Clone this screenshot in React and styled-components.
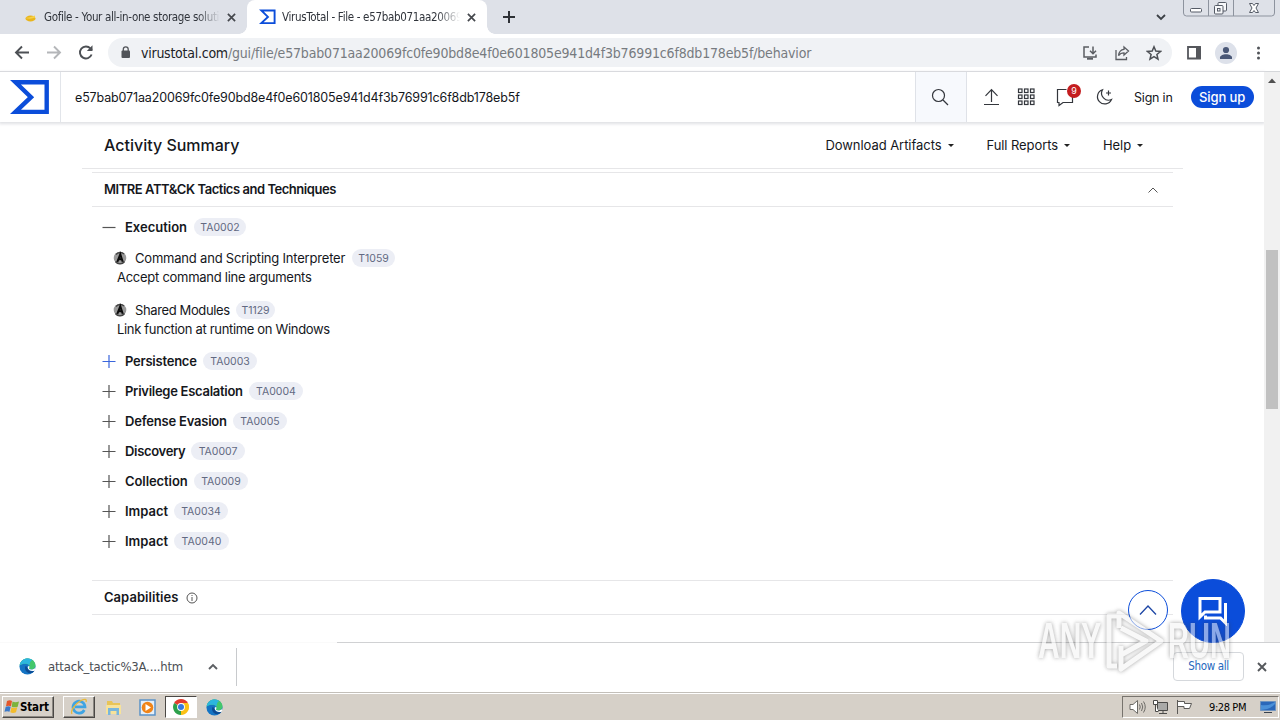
import React from "react";
import styled, { createGlobalStyle, css } from "styled-components";

const HASH = "e57bab071aa20069fc0fe90bd8e4f0e601805e941d4f3b76991c6f8db178eb5f";

const tactics = [
  { name: "Persistence", code: "TA0003", active: true, width: 72, badge: 54, track: -0.23 },
  { name: "Privilege Escalation", code: "TA0004", width: 118, badge: 54, track: -0.27 },
  { name: "Defense Evasion", code: "TA0005", width: 102, badge: 54, track: -0.2 },
  { name: "Discovery", code: "TA0007", width: 60, badge: 54, track: -0.32 },
  { name: "Collection", code: "TA0009", width: 63, badge: 54, track: -0.08 },
  { name: "Impact", code: "TA0034", width: 43, badge: 54, track: 0 },
  { name: "Impact", code: "TA0040", width: 43, badge: 55, track: 0 },
];

const GlobalStyle = createGlobalStyle`
  * {
    box-sizing: border-box;
  }

  body {
    margin: 0;
    background: #fff;
    overflow: hidden;
    font-family: Inter, "Liberation Sans", sans-serif;
  }
`;

const systemFont = css`
  font-family: "DejaVu Sans Condensed", "Noto Sans", sans-serif;
  font-stretch: condensed;
`;

const Screen = styled.div`
  width: 1280px;
  height: 720px;
  display: flex;
  flex-direction: column;
  background: #fff;
  color: #15171c;
  overflow: hidden;
  white-space: nowrap;
`;

const TabStrip = styled.div`
  height: 34px;
  display: flex;
  align-items: stretch;
  background: #dee1e8;
`;

const Tab = styled.div`
  position: relative;
  width: ${(p) => (p.$active ? 240 : 247)}px;
  display: flex;
  align-items: center;
  padding: 0 11px 0 ${(p) => (p.$active ? 12 : 22)}px;
  background: ${(p) => (p.$active ? "#fff" : "transparent")};
  border-radius: 8px 8px 0 0;

  &::before,
  &::after {
    content: "";
    display: ${(p) => (p.$active ? "block" : "none")};
    position: absolute;
    bottom: 0;
    width: 8px;
    height: 8px;
  }

  &::before {
    left: -8px;
    background: radial-gradient(circle at 0 0, transparent 7.5px, #fff 8px);
  }

  &::after {
    right: -8px;
    background: radial-gradient(circle at 100% 0, transparent 7.5px, #fff 8px);
  }
`;

const TabTitle = styled.span`
  ${systemFont}
  width: ${(p) => p.$width}px;
  margin-left: ${(p) => p.$gap}px;
  font-size: 11.5px;
  letter-spacing: ${(p) => p.$track}px;
  color: #30343b;
  overflow: hidden;
  -webkit-mask-image: linear-gradient(90deg, #000 87%, transparent);
  mask-image: linear-gradient(90deg, #000 87%, transparent);
`;

const TabClose = styled.svg`
  width: 9px;
  height: 9px;
  margin-left: auto;
`;

const NewTab = styled.svg`
  width: 12px;
  height: 12px;
  margin: 11px 0 0 16px;
`;

const TabSearch = styled.svg`
  width: 10px;
  height: 7px;
  margin: 14px 0 0 auto;
`;

const WindowButtons = styled.svg`
  width: 94px;
  height: 17px;
  margin: 0 4px 0 16px;
`;

const Toolbar = styled.div`
  height: 38px;
  display: flex;
  align-items: center;
  border-bottom: 1px solid #d5d7da;
  background: #fff;
`;

const NavIcon = styled.svg`
  width: 16px;
  height: 16px;
  margin-left: ${(p) => p.$gap}px;
  flex: none;
`;

const AddressBar = styled.div`
  ${systemFont}
  width: 1064px;
  height: 29px;
  margin-left: 14px;
  padding: 0 10px 0 12px;
  border-radius: 15px;
  background: #f0f2f5;
  display: flex;
  align-items: center;
  color: #777b80;
  font-size: 14px;
`;

const Domain = styled.span`
  margin-left: 10px;
  letter-spacing: -0.25px;
  color: #202226;
`;

const UrlPath = styled.span`
  letter-spacing: -0.17px;
`;

const AddressActions = styled.div`
  display: flex;
  gap: 16px;
  margin-left: auto;

  svg {
    width: 16px;
    height: 16px;
  }
`;

const Profile = styled.div`
  width: 22px;
  height: 22px;
  margin-left: 13px;
  border-radius: 50%;
  background: #dde1ea;
  overflow: hidden;
`;

const PageArea = styled.div`
  height: 570px;
  display: flex;
  position: relative;
`;

const Page = styled.div`
  width: 1264px;
  background: #fff;
`;

const Header = styled.header`
  height: 50px;
  display: flex;
  align-items: center;
  box-shadow: 0 1px 3px 1px #dfe0e4;
`;

const LogoCell = styled.div`
  width: 61px;
  height: 100%;
  padding: 8px 0 0 10px;
  border-right: 1px solid #e2e5ea;
`;

const SearchText = styled.div`
  flex: 1;
  padding-left: 14px;
  font-size: 12.5px;
  letter-spacing: -0.14px;
`;

const SearchButton = styled.div`
  width: 52px;
  height: 100%;
  display: flex;
  align-items: center;
  justify-content: center;
  padding-right: 2px;
  background: #f7f9fd;
  border: solid #dfe2e8;
  border-width: 0 1px;
`;

const HeaderActions = styled.div`
  width: 297px;
  display: flex;
  align-items: center;
  padding-left: 14px;
`;

const HeaderIcon = styled.svg`
  width: 20px;
  height: 20px;
  margin-right: ${(p) => p.$gap}px;
  fill: none;
  stroke: #33363c;
  stroke-width: 1.2;
`;

const ChatIcon = styled.div`
  position: relative;
  display: flex;
`;

const Counter = styled.span`
  position: absolute;
  left: 12px;
  top: -3px;
  width: 14px;
  height: 14px;
  border-radius: 50%;
  background: #c41d1f;
  color: #fff;
  font-size: 9px;
  line-height: 14px;
  text-align: center;
`;

const SignIn = styled.span`
  font-size: 12.5px;
  letter-spacing: -0.2px;
`;

const SignUp = styled.span`
  width: 63px;
  height: 22px;
  margin-left: 18px;
  border-radius: 11px;
  background: #0b4dda;
  color: #fff;
  font-size: 13px;
  font-weight: 500;
  letter-spacing: -0.1px;
  line-height: 22px;
  text-align: center;
`;

const SummaryBar = styled.div`
  height: 47px;
  width: 1101px;
  margin-left: 82px;
  padding: 0 40px 0 22px;
  display: flex;
  align-items: center;
  border-bottom: 1px solid #e6e6e8;
`;

const SummaryTitle = styled.h1`
  margin: 0 auto 0 0;
  font-size: 16px;
  font-weight: 500;
  letter-spacing: ${(p) => p.$track}px;
`;

const MenuLabel = styled.span`
  display: flex;
  align-items: center;
  margin-left: ${(p) => p.$gap}px;
  font-size: 13px;
  letter-spacing: ${(p) => p.$track}px;

  &::after {
    content: "";
    margin: 1px 0 0 6px;
    border: solid transparent;
    border-width: 3px 3px 0;
    border-top-color: #222;
  }
`;

const SectionHeader = styled.div`
  width: 1081px;
  height: 35px;
  margin: ${(p) => p.$top}px 0 0 92px;
  padding: 0 15px 1px 12px;
  display: flex;
  align-items: center;
  border: solid #e6e6e8;
  border-width: 1px 0;
`;

const SectionTitle = styled.h2`
  margin: 0;
  font-size: 13px;
  font-weight: 600;
  letter-spacing: ${(p) => p.$track}px;
`;

const TacticList = styled.div`
  height: 373px;
  padding: 4px 0 0 102px;
`;

const TacticRow = styled.div`
  height: 30px;
  display: flex;
  align-items: center;
  padding-top: 1px;
`;

const ToggleIcon = styled.svg`
  width: 14px;
  height: 14px;
  margin-right: 9px;
  stroke: ${(p) => (p.$active ? "#3a66dc" : "#555")};
  stroke-width: 1.2;
`;

const TacticName = styled.span`
  width: ${(p) => p.$width}px;
  font-size: 13px;
  font-weight: 600;
  letter-spacing: ${(p) => p.$track}px;
`;

const Badge = styled.span`
  width: ${(p) => p.$width}px;
  height: 18px;
  margin-left: 6px;
  border-radius: 9px;
  background: #eceef5;
  color: #626982;
  font-size: 10.5px;
  line-height: 19px;
  text-align: center;
`;

const Technique = styled.div`
  height: 52px;
  padding: 7px 0 0 11px;
`;

const TechniqueRow = styled.div`
  height: 20px;
  display: flex;
  align-items: center;
`;

const TechniqueName = styled.span`
  width: ${(p) => p.$width}px;
  margin-left: 8px;
  font-size: 13px;
  letter-spacing: ${(p) => p.$track}px;
`;

const TechniqueNote = styled.div`
  padding-left: 4px;
  font-size: 13px;
  line-height: 19px;
  letter-spacing: ${(p) => p.$track}px;
`;

const Scrollbar = styled.div`
  width: 16px;
  background: #f1f1f1;
  padding-left: 2px;
`;

const ScrollArrow = styled.svg`
  display: block;
  width: 14px;
  height: 17px;
`;

const ScrollThumb = styled.div`
  width: 12px;
  height: 159px;
  margin-top: 161px;
  background: #c1c1c1;
`;

const FloatingButton = styled.div`
  position: absolute;
  left: ${(p) => p.$left}px;
  top: ${(p) => p.$top}px;
  width: ${(p) => p.$size}px;
  height: ${(p) => p.$size}px;
  border: 1px solid #0b4dda;
  border-radius: 50%;
  background: ${(p) => (p.$solid ? "#0b4dda" : "#fff")};
  display: flex;
  align-items: center;
  justify-content: center;
`;

const DownloadBar = styled.div`
  ${systemFont}
  height: 50px;
  display: flex;
  align-items: center;
  background: #fff;
  border-top: 1px solid #d0d1d3;
  border-image: linear-gradient(90deg, #fafafa 337px, #d0d1d3 337px) 1;
  padding: 0 13px 2px 19px;
`;

const FileName = styled.span`
  width: 134px;
  margin: 0 26px 0 12px;
  font-size: 13px;
  letter-spacing: -0.2px;
  color: #4b4e53;
`;

const Divider = styled.div`
  width: 1px;
  height: 38px;
  margin-left: 18px;
  background: #c8cacd;
`;

const ShowAll = styled.div`
  width: 71px;
  height: 29px;
  margin: 0 13px 0 auto;
  border: 1px solid #d5d8dc;
  border-radius: 4px;
  color: #2567bd;
  font-size: 11.5px;
  letter-spacing: -0.35px;
  line-height: 27px;
  text-align: center;
`;

const Taskbar = styled.div`
  ${systemFont}
  height: 28px;
  display: flex;
  align-items: center;
  padding: 1px 1px 0 2px;
  background: #d6d0c8;
  border-top: 1px solid #c3bfb9;
  box-shadow: inset 0 1px #fff;
`;

const StartButton = styled.div`
  width: 52px;
  height: 22px;
  display: flex;
  align-items: center;
  padding-left: 1px;
  border: 1px solid;
  border-color: #fff #4b4845 #4b4845 #fff;
  box-shadow: inset -1px -1px #8c8882;
  font-size: 11.5px;
  font-weight: 700;
  letter-spacing: -0.15px;
  color: #000;
`;

const TaskButton = styled.div`
  width: 32px;
  height: 22px;
  margin-left: ${(p) => p.$gap || 0}px;
  display: flex;
  align-items: center;
  justify-content: center;
  border: 1px solid transparent;
  ${(p) =>
    p.$look === "raised" &&
    css`
      border-color: #fff #4b4845 #4b4845 #fff;
      box-shadow: inset -1px -1px #8c8882;
    `}
  ${(p) =>
    p.$look === "pressed" &&
    css`
      background: #fff;
      border-color: #4b4845 #fff #fff #4b4845;
    `}
`;

const Tray = styled.div`
  width: 157px;
  height: 22px;
  margin-left: auto;
  display: flex;
  align-items: center;
  padding-left: 6px;
  border: 1px solid;
  border-color: #77736d #fff #fff #77736d;

  svg {
    flex: none;
  }
`;

const TrayIcon = styled.svg`
  width: 17px;
  height: 16px;
  margin-right: 7px;
`;

const Clock = styled.span`
  width: 40px;
  margin: 0 11px 0 8px;
  font-size: 11px;
  letter-spacing: -0.4px;
  color: #000;
`;

const Watermark = styled.div`
  position: absolute;
  left: 1038px;
  top: 608px;
  width: 196px;
  height: 66px;
  display: flex;
  align-items: center;
  opacity: 0.55;
  filter: drop-shadow(0 0 2px rgba(60, 60, 60, 0.85));
`;

const WatermarkWord = styled.span`
  width: 66px;
  font-family: "Liberation Sans Narrow", "Liberation Sans", sans-serif;
  font-size: 50px;
  font-weight: 700;
  line-height: 68px;
  color: #f4f4f4;
  transform: scaleX(${(p) => p.$squeeze});
  transform-origin: left;
`;

const WatermarkPlay = styled.svg`
  width: 64px;
  height: 66px;
  flex: none;
  fill: none;
  stroke: #f4f4f4;
  stroke-width: 5;
  stroke-linejoin: round;
`;

const CollapseIcon = styled.svg`
  width: 10px;
  height: 6px;
  margin: 1px 0 0 auto;
`;

const InfoIcon = styled.svg`
  width: 12px;
  height: 12px;
  margin: 1px 0 0 8px;
`;

const CloseGlyph = () => (
  <TabClose viewBox="0 0 10 10" stroke="#45484d" strokeWidth="1.900">
    <path d="M1 1l8 8M9 1L1 9" />
  </TabClose>
);

const VtLogo = ({ width, height, stroke }) => (
  <svg width={width} height={height} viewBox="0 0 40 35">
    <path d="M5.500 2.300H36.700V31.900H5.500L21 17.200Z" fill="none" stroke="#0b4dda" strokeWidth={stroke} />
  </svg>
);

const EdgeLogo = ({ size = 17 }) => (
  <svg width={size} height={size} viewBox="0 0 18 18">
    <circle cx="9" cy="9" r="8.500" fill="#1474c4" />
    <path d="M.6 8C1.400 3.300 5 .5 9 .5c5 0 8.500 3.500 8.500 7.300 0 3-2.300 4.400-4.700 4.400-1.500 0-2.400-.5-2.400-1.200 0-.6.700-.9.700-2C11.100 7.300 9.300 6 6.600 6 4.200 6 2 6.700.6 8z" fill="#43c76c" />
    <path d="M.6 8C1.400 3.300 5 .5 9 .5c2 0 3.800.6 5.200 1.600C11 3.500 12 6 11 7.800 10.400 6.500 8.800 6 6.600 6 4.200 6 2 6.700.6 8z" fill="#2cb6df" />
    <path d="M7 8.500c-1.600 3 .4 7.500 4.600 7.500 2 0 3.700-.7 4.800-2.400-3 1.200-7.300.3-7.500-4.100z" fill="#0d4b93" />
    <path d="M10.500 8.200c.9.900.7 1.800.2 2.500-.5.800.4 1.500 2.100 1.500 1.900 0 3.300-.6 4-1.600l.5 1.300-.7 1.500c-3.200.9-7.300-.2-7.500-3.800z" fill="#fff" />
  </svg>
);

const AttackIcon = () => (
  <svg width="14" height="14" viewBox="0 0 14 14">
    <circle cx="7" cy="7" r="6.300" fill="#9a9a9a" />
    <path d="M3 3.500A5.500 5.500 0 0 1 11 3M2.500 10.500a5.500 5.500 0 0 0 9 0" stroke="#444" strokeWidth="1.400" fill="none" />
    <path d="M4.300 10.800L7.300 3.300l2.400 7.500M5.300 8.300h3.800" stroke="#0b0b0b" strokeWidth="2" fill="none" />
  </svg>
);

const Toggle = ({ open, active }) => (
  <ToggleIcon viewBox="0 0 14 14" $active={active}>
    <path d={open ? "M.5 7.500h13" : "M.5 7.500h13M7 1v13"} />
  </ToggleIcon>
);

function BrowserChrome() {
  return (
    <>
      <TabStrip>
        <Tab>
          <svg width="16" height="16" viewBox="0 0 16 16">
            <ellipse cx="8.500" cy="9.500" rx="5" ry="3" fill="#e9b51c" />
            <path d="M3 9Q8 8.500 13 6.500v2q-4 2-10 .5z" fill="#f6d14a" />
          </svg>
          <TabTitle $width={176} $gap={6} $track={-0.33}>Gofile - Your all-in-one storage solution</TabTitle>
          <CloseGlyph />
        </Tab>
        <Tab $active>
          <VtLogo width={17} height={16} stroke={4.5} />
          <TabTitle $width={178} $gap={6} $track={-0.33}>VirusTotal - File - e57bab071aa20069fc</TabTitle>
          <CloseGlyph />
        </Tab>
        <NewTab viewBox="0 0 12 12" stroke="#2e3136" strokeWidth="2">
          <path d="M6 0v12M0 6h12" />
        </NewTab>
        <TabSearch viewBox="0 0 10 7" fill="none" stroke="#3c4046" strokeWidth="1.800">
          <path d="M1 1l4 4 4-4" />
        </TabSearch>
        <WindowButtons viewBox="0 0 94 17" fill="none" stroke="#8d939e">
          <path d="M1.500 0v13q0 3 3 3h85q3 0 3-3V0M26.500 0v16M51.500 0v16" />
          <g stroke="#555b66">
            <rect x="8.500" y="8.500" width="11" height="3.500" rx="1" fill="#fff" />
            <rect x="36" y="2.500" width="8.500" height="8.500" rx="1" fill="#f7f8fa" />
            <rect x="32.500" y="5.500" width="8.500" height="8.500" rx="1" fill="#f7f8fa" />
            <rect x="35.500" y="8.500" width="2.500" height="2.500" />
            <path d="M67.500 3.500h3l1.500 2 1.500-2h3L74 8l2.500 4.500h-3l-1.500-2-1.500 2h-3L70 8z" fill="#fff" />
          </g>
        </WindowButtons>
      </TabStrip>
      <Toolbar>
        <NavIcon $gap={14} viewBox="0 0 16 16" fill="none" stroke="#4d5055" strokeWidth="1.900">
          <path d="M15 7.500H2M8 1.500l-6 6 6 6" />
        </NavIcon>
        <NavIcon $gap={16} viewBox="0 0 16 16" fill="none" stroke="#b4b6b9" strokeWidth="1.900">
          <path d="M1 7.500h13M8 1.500l6 6-6 6" />
        </NavIcon>
        <NavIcon $gap={16} viewBox="0 0 16 16" fill="none" stroke="#4d5055" strokeWidth="1.900">
          <path d="M13.600 9.500A6 6 0 1 1 12.500 3.500L14 5" />
          <path d="M14.500.3V6H8.800z" fill="#4d5055" stroke="none" />
        </NavIcon>
        <AddressBar>
          <svg width="11" height="13" viewBox="0 0 11 13">
            <rect x="1.500" y="4.500" width="8.500" height="7.500" rx="1" fill="#515459" />
            <path d="M3.300 5V3.300a2.400 2.400 0 0 1 4.900 0V5" fill="none" stroke="#515459" strokeWidth="1.300" />
          </svg>
          <Domain>virustotal.com</Domain>
          <UrlPath>/gui/file/{HASH}/behavior</UrlPath>
          <AddressActions>
            <svg viewBox="0 0 16 16" fill="none" stroke="#5a5d62" strokeWidth="1.500">
              <path d="M7 2H2v10h12V9.500M11 1.500v7M8 5.800l3 3 3-3" />
              <path d="M5 13.700h6" strokeWidth="2" />
            </svg>
            <svg viewBox="0 0 16 16" fill="none" stroke="#5a5d62" strokeWidth="1.300">
              <path d="M2 5v9.500h10.500V12" />
              <path d="M10 2l4.500 4L10 10V7.800C7.500 7.800 6 8.500 4.500 10.500 5 7 7 4.600 10 4.300z" />
            </svg>
            <svg viewBox="0 0 16 16" fill="none" stroke="#4d5055" strokeWidth="1.500">
              <path d="M8 1.800l1.800 4.300 4.700.4-3.600 3 1.100 4.600L8 11.700l-4 2.400 1.100-4.600-3.600-3 4.700-.4z" />
            </svg>
          </AddressActions>
        </AddressBar>
        <NavIcon $gap={14} viewBox="0 0 16 16">
          <path d="M2 2h12v11.500H2z" fill="#fff" stroke="#55575c" strokeWidth="1.800" />
          <path d="M10 1.500h5v12.500h-5z" fill="#55575c" />
        </NavIcon>
        <Profile>
          <svg width="22" height="22" viewBox="0 0 22 22" fill="#4a5877">
            <circle cx="11" cy="8" r="3.100" />
            <path d="M5 17v-1.500c0-2 3-3.300 6-3.300s6 1.300 6 3.300V17z" />
          </svg>
        </Profile>
        <NavIcon $gap={13} viewBox="0 0 16 16" fill="#505358">
          <circle cx="8.500" cy="3" r="1.500" />
          <circle cx="8.500" cy="8" r="1.500" />
          <circle cx="8.500" cy="13" r="1.500" />
        </NavIcon>
      </Toolbar>
    </>
  );
}

function SiteHeader() {
  return (
    <Header>
      <LogoCell>
        <VtLogo width={40} height={35} stroke={4.4} />
      </LogoCell>
      <SearchText>{HASH}</SearchText>
      <SearchButton>
        <svg width="18" height="18" viewBox="0 0 18 18" fill="none" stroke="#33363c" strokeWidth="1.200">
          <circle cx="7.500" cy="7.500" r="6" />
          <path d="M12 12l5 5" />
        </svg>
      </SearchButton>
      <HeaderActions>
        <HeaderIcon $gap={15} viewBox="0 0 20 20">
          <path d="M3 17.500h15M10.500 15V3M4.500 8.800l6-6.100 6 6.100" />
        </HeaderIcon>
        <HeaderIcon $gap={19} viewBox="0 0 20 20">
          {[2.5, 8.5, 14.5].map((y) =>
            [2.5, 8.5, 14.5].map((x) => <rect key={`${x}-${y}`} x={x} y={y - 0.5} width="3.500" height="3.500" />)
          )}
        </HeaderIcon>
        <ChatIcon>
          <HeaderIcon $gap={19} viewBox="0 0 20 20">
            <path d="M17.500 9v6.500H8L4 18.500v-3H2.500v-13h9" />
          </HeaderIcon>
          <Counter>9</Counter>
        </ChatIcon>
        <HeaderIcon $gap={20} viewBox="0 0 20 20">
          <path d="M8.500 2.700A7.300 7.300 0 1 0 17.500 12.500 7 7 0 0 1 8.500 2.700z" />
          <path d="M14.500 3.500v5M12 6h5" />
        </HeaderIcon>
        <SignIn>Sign in</SignIn>
        <SignUp>Sign up</SignUp>
      </HeaderActions>
    </Header>
  );
}

function ActivitySummary() {
  return (
    <>
      <SummaryBar>
        <SummaryTitle $track={0}>Activity Summary</SummaryTitle>
        <MenuLabel $gap={0} $track={-0.05}>Download Artifacts</MenuLabel>
        <MenuLabel $gap={33} $track={-0.08}>Full Reports</MenuLabel>
        <MenuLabel $gap={33} $track={-0.1}>Help</MenuLabel>
      </SummaryBar>
      <SectionHeader $top={3}>
        <SectionTitle $track={-0.46}>MITRE ATT&amp;CK Tactics and Techniques</SectionTitle>
        <CollapseIcon viewBox="0 0 10 6" fill="none" stroke="#555">
          <path d="M.5 5.500L5 1l4.500 4.500" />
        </CollapseIcon>
      </SectionHeader>
      <TacticList>
        <TacticRow>
          <Toggle open />
          <TacticName $width={63} $track={0}>Execution</TacticName>
          <Badge $width={52}>TA0002</Badge>
        </TacticRow>
        <Technique>
          <TechniqueRow>
            <AttackIcon />
            <TechniqueName $width={211} $track={-0.2}>Command and Scripting Interpreter</TechniqueName>
            <Badge $width={43}>T1059</Badge>
          </TechniqueRow>
          <TechniqueNote $track={-0.27}>Accept command line arguments</TechniqueNote>
        </Technique>
        <Technique>
          <TechniqueRow>
            <AttackIcon />
            <TechniqueName $width={95} $track={-0.38}>Shared Modules</TechniqueName>
            <Badge $width={39}>T1129</Badge>
          </TechniqueRow>
          <TechniqueNote $track={-0.33}>Link function at runtime on Windows</TechniqueNote>
        </Technique>
        {tactics.map((t) => (
          <TacticRow key={t.code}>
            <Toggle active={t.active} />
            <TacticName $width={t.width} $track={t.track}>{t.name}</TacticName>
            <Badge $width={t.badge}>{t.code}</Badge>
          </TacticRow>
        ))}
      </TacticList>
      <SectionHeader $top={0}>
        <SectionTitle $track={0.04}>Capabilities</SectionTitle>
        <InfoIcon viewBox="0 0 12 12" fill="none" stroke="#555">
          <circle cx="6" cy="6" r="5" />
          <path d="M6 5v4M6 3v1" />
        </InfoIcon>
      </SectionHeader>
    </>
  );
}

function Downloads() {
  return (
    <DownloadBar>
      <EdgeLogo />
      <FileName>attack_tactic%3A....htm</FileName>
      <svg width="10" height="7" viewBox="0 0 10 7" fill="none" stroke="#5c5f63" strokeWidth="1.900">
        <path d="M1 6l4-4 4 4" />
      </svg>
      <Divider />
      <ShowAll>Show all</ShowAll>
      <svg width="10" height="10" viewBox="0 0 10 10" stroke="#55585c" strokeWidth="1.900">
        <path d="M1 1l8 8M9 1L1 9" />
      </svg>
    </DownloadBar>
  );
}

function WindowsTaskbar() {
  return (
    <Taskbar>
      <StartButton>
        <svg width="16" height="16" viewBox="0 0 16 16">
          <path d="M3 2q3-1.500 5 0L7 7.300q-2.300-1.300-5 0z" fill="#e4572a" />
          <path d="M8.500 2.500q2.500 1.300 6.500 0l-1.300 5.200q-3 1.200-6 0z" fill="#7cb33c" />
          <path d="M1.700 7.800q2.700-1.300 5 0l-1.200 5q-2.300-1.200-5 0z" fill="#3b79c9" />
          <path d="M7.500 8.300q2.500 1.200 5.800 0L12 13.300q-3 1.200-5.700 0z" fill="#f3bc2d" />
        </svg>
        Start
      </StartButton>
      <TaskButton $gap={9} $look="raised">
        <svg width="18" height="18" viewBox="0 0 18 18" fill="none">
          <path d="M14.300 12A6 6 0 1 1 15 8.800H5" stroke="#3fa4e3" strokeWidth="2.700" />
          <path d="M2 16C0 13 5 6 11 2.500c4-2 6-1.500 5 1.500" stroke="#e8b93a" strokeWidth="1.300" />
        </svg>
      </TaskButton>
      <TaskButton $gap={2}>
        <svg width="17" height="17" viewBox="0 0 17 17">
          <path d="M2 2h5l1 2h7v11H2z" fill="#e8c457" />
          <path d="M1 6h15v9H1z" fill="#f7e29a" />
          <path d="M3 9h11v7h-2.500v-4h-6v4H3z" fill="#79b6dc" />
        </svg>
      </TaskButton>
      <TaskButton $gap={2}>
        <svg width="17" height="17" viewBox="0 0 17 17">
          <path d="M1 1h15v15H1z" fill="#e5eff8" stroke="#5b93c7" strokeWidth="1.500" />
          <circle cx="8.500" cy="8.500" r="5.800" fill="#f08418" />
          <path d="M6.500 5l5.500 3.500L6.500 12z" fill="#fff" />
        </svg>
      </TaskButton>
      <TaskButton $gap={2} $look="pressed">
        <svg width="16" height="16" viewBox="0 0 16 16">
          <path d="M8 8L1.100 4A8 8 0 0 1 14.900 4z" fill="#e33b2e" />
          <path d="M8 8l6.900-4A8 8 0 0 1 8 16z" fill="#fbc116" />
          <path d="M8 8v8A8 8 0 0 1 1.100 4z" fill="#2da14c" />
          <path d="M8 4h6.900q2 3.500.2 7.500L8 16l3.200-6.200z" fill="#fbc116" />
          <circle cx="8" cy="8" r="3.900" fill="#fff" />
          <circle cx="8" cy="8" r="3" fill="#3679df" />
        </svg>
      </TaskButton>
      <TaskButton $gap={1}>
        <EdgeLogo />
      </TaskButton>
      <Tray>
        <TrayIcon viewBox="0 0 17 16" fill="#fff" stroke="#6c6a66">
          <path d="M1 5.500h3L8.500 1.500v13L4 10.500H1z" />
          <path d="M10.500 5.500q1.500 2.500 0 5M12.500 4q2.500 4 0 8M14.500 2.500q3.500 5.500 0 11" fill="none" />
        </TrayIcon>
        <TrayIcon viewBox="0 0 17 16" stroke="#4b4a48">
          <path d="M4.500 3.500h10v8h-10z" fill="#a9a9a7" />
          <path d="M.5 1.500h4v4h-4zM2.500 5.500v7h3M6 14.500h8M10 11.500v3" fill="#fff" />
        </TrayIcon>
        <TrayIcon viewBox="0 0 17 16" fill="#fff" stroke="#5c5a57">
          <path d="M.5 1v14M.5 2.500h7v2h7l-2 5H7v-2H.5z" />
        </TrayIcon>
        <Clock>9:28 PM</Clock>
        <svg width="16" height="14" viewBox="0 0 16 14">
          <path d="M.5 1.500h15v9H.5z" fill="#2b67b9" stroke="#6f93bf" />
          <path d="M1 10V5q8 1 14-3v2q-4 5-14 6z" fill="#4b90d8" />
          <path d="M4 12.500h8" stroke="#37414e" />
        </svg>
      </Tray>
    </Taskbar>
  );
}

function App() {
  return (
    <>
      <GlobalStyle />
      <Screen>
        <BrowserChrome />
        <PageArea>
          <Page>
            <SiteHeader />
            <ActivitySummary />
          </Page>
          <Scrollbar>
            <ScrollArrow viewBox="0 0 14 17">
              <path d="M2 11l4-4.500L10 11z" fill="#505050" />
            </ScrollArrow>
            <ScrollThumb />
          </Scrollbar>
          <FloatingButton $left={1128} $top={518} $size={40}>
            <svg width="18" height="12" viewBox="0 0 18 12" fill="none" stroke="#1d46a5" strokeWidth="1.300">
              <path d="M1 10.500L9 2l8 8.500" />
            </svg>
          </FloatingButton>
          <FloatingButton $left={1181} $top={507} $size={64} $solid>
            <svg width="32" height="30" viewBox="0 0 32 30" fill="none" stroke="#fff" strokeWidth="3">
              <path d="M3 21V2.500h20V16H8z" />
              <path d="M28.500 7v20l-5-5H8.500v-2.500" />
            </svg>
          </FloatingButton>
        </PageArea>
        <Downloads />
        <WindowsTaskbar />
        <Watermark>
          <WatermarkWord $squeeze={0.6}>ANY</WatermarkWord>
          <WatermarkPlay viewBox="0 0 64 66">
            <path d="M15 8H5v50h8M15 20V5l42 28-40 28V38M17 20l25 13-25 14" />
          </WatermarkPlay>
          <WatermarkWord $squeeze={0.58}>RUN</WatermarkWord>
        </Watermark>
      </Screen>
    </>
  );
}

export default App;
